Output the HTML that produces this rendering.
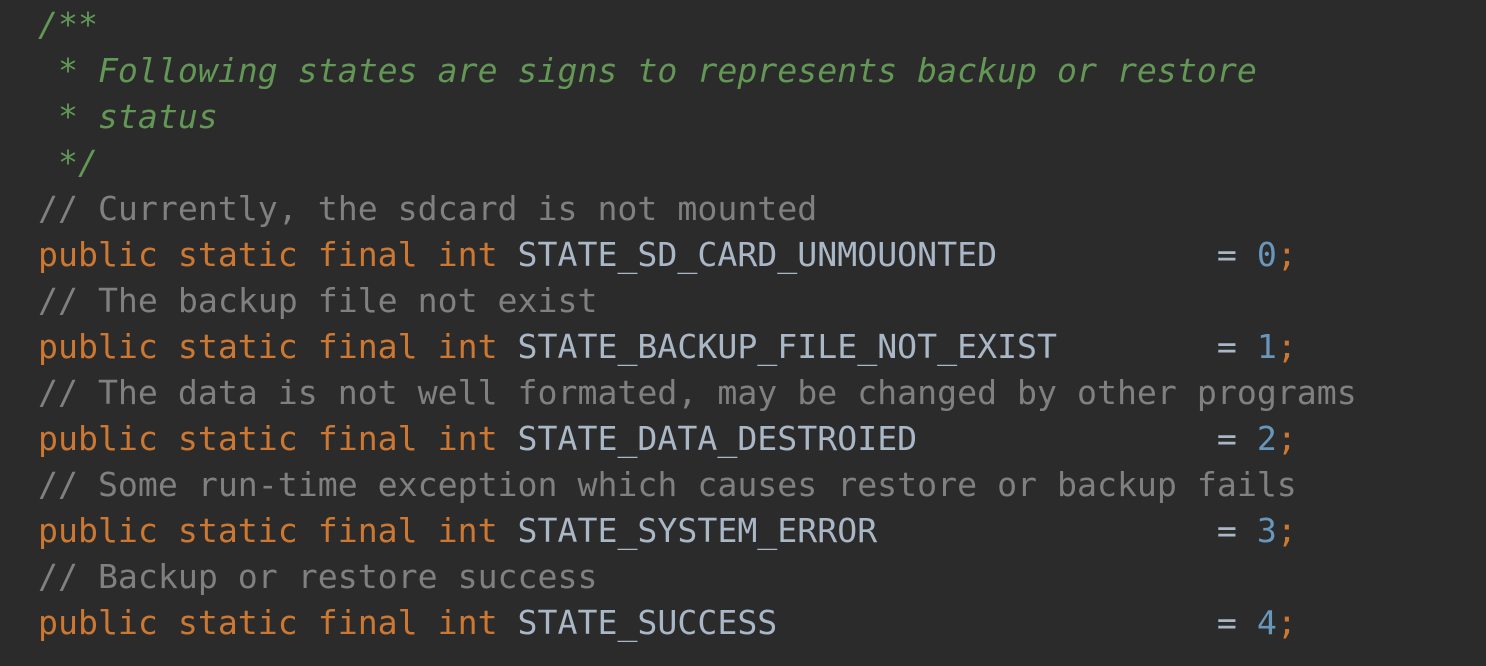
<!DOCTYPE html>
<html><head><meta charset="utf-8"><style>
html,body{margin:0;padding:0;background:#2b2b2b;width:1486px;height:666px;overflow:hidden}
pre{margin:0;padding:2px 0 0 38px;font-family:"DejaVu Sans Mono","Liberation Mono",monospace;font-size:33.2px;line-height:46px;color:#a9b7c6;letter-spacing:0}
.k{color:#cc7832}.c{color:#808080}.d{color:#629755;font-style:italic}.n{color:#6897bb}
</style></head><body><pre><span class="d">/**
 * Following states are signs to represents backup or restore
 * status
 */</span>
<span class="c">// Currently, the sdcard is not mounted</span>
<span class="k">public static final int</span> STATE_SD_CARD_UNMOUONTED           = <span class="n">0</span><span class="k">;</span>
<span class="c">// The backup file not exist</span>
<span class="k">public static final int</span> STATE_BACKUP_FILE_NOT_EXIST        = <span class="n">1</span><span class="k">;</span>
<span class="c">// The data is not well formated, may be changed by other programs</span>
<span class="k">public static final int</span> STATE_DATA_DESTROIED               = <span class="n">2</span><span class="k">;</span>
<span class="c">// Some run-time exception which causes restore or backup fails</span>
<span class="k">public static final int</span> STATE_SYSTEM_ERROR                 = <span class="n">3</span><span class="k">;</span>
<span class="c">// Backup or restore success</span>
<span class="k">public static final int</span> STATE_SUCCESS                      = <span class="n">4</span><span class="k">;</span></pre></body></html>
